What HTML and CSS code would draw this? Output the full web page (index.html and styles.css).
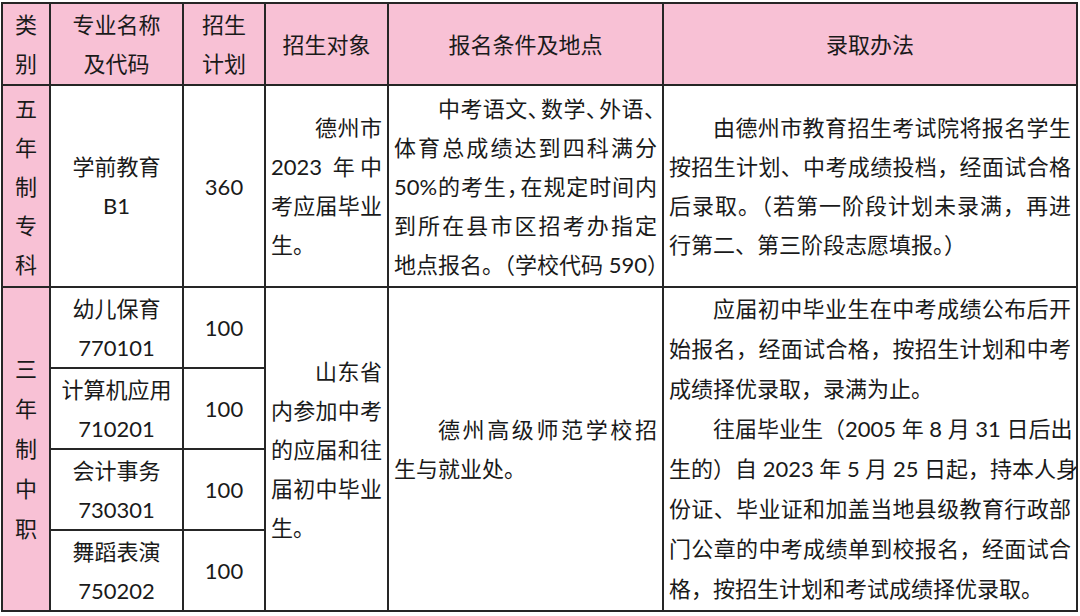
FILE: index.html
```html
<!DOCTYPE html>
<html lang="zh-CN">
<head>
<meta charset="utf-8">
<title>招生计划</title>
<link rel="stylesheet" href="styles.css">
</head>
<body>
<table class="plan">
  <colgroup>
    <col class="c1"><col class="c2"><col class="c3"><col class="c4"><col class="c5"><col class="c6">
  </colgroup>
  <tr class="head">
    <th>类<br>别</th>
    <th>专业名称<br>及代码</th>
    <th>招生<br>计划</th>
    <th>招生对象</th>
    <th>报名条件及地点</th>
    <th>录取办法</th>
  </tr>
  <tr class="row1">
    <td class="kind">五<br>年<br>制<br>专<br>科</td>
    <td class="mid">学前教育<br>B1</td>
    <td class="mid">360</td>
    <td class="txt">
      <span class="ln j ind">德州市</span>
      <span class="ln j">2023 年中</span>
      <span class="ln j">考应届毕业</span>
      <span class="ln">生。</span>
    </td>
    <td class="txt">
      <span class="ln j ind">中考语文<span class="pn">、</span>数学<span class="pn">、</span>外语<span class="pn">、</span></span>
      <span class="ln j">体育总成绩达到四科满分</span>
      <span class="ln j">50%的考生<span class="pn">，</span>在规定时间内</span>
      <span class="ln j">到所在县市区招考办指定</span>
      <span class="ln j">地点报名。（学校代码 590）</span>
    </td>
    <td class="txt">
      <span class="ln j ind">由德州市教育招生考试院将报名学生</span>
      <span class="ln j">按招生计划、中考成绩投档，经面试合格</span>
      <span class="ln j">后录取。（若第一阶段计划未录满，再进</span>
      <span class="ln">行第二、第三阶段志愿填报。）</span>
    </td>
  </tr>
  <tr class="sub">
    <td class="kind" rowspan="4">三<br>年<br>制<br>中<br>职</td>
    <td class="mid code">幼儿保育<br>770101</td>
    <td class="mid">100</td>
    <td class="txt" rowspan="4">
      <span class="ln j ind">山东省</span>
      <span class="ln j">内参加中考</span>
      <span class="ln j">的应届和往</span>
      <span class="ln j">届初中毕业</span>
      <span class="ln">生。</span>
    </td>
    <td class="txt" rowspan="4">
      <span class="ln j ind">德州高级师范学校招</span>
      <span class="ln">生与就业处。</span>
    </td>
    <td class="txt wide" rowspan="4">
      <span class="ln j ind">应届初中毕业生在中考成绩公布后开</span>
      <span class="ln j">始报名，经面试合格，按招生计划和中考</span>
      <span class="ln">成绩择优录取，录满为止。</span>
      <span class="ln j ind">往届毕业生（2005 年 8 月 31 日后出</span>
      <span class="ln j">生的）自 2023 年 5 月 25 日起，持本人身</span>
      <span class="ln j">份证、毕业证和加盖当地县级教育行政部</span>
      <span class="ln j">门公章的中考成绩单到校报名，经面试合</span>
      <span class="ln">格，按招生计划和考试成绩择优录取。</span>
    </td>
  </tr>
  <tr class="sub">
    <td class="mid code">计算机应用<br>710201</td>
    <td class="mid">100</td>
  </tr>
  <tr class="sub">
    <td class="mid code">会计事务<br>730301</td>
    <td class="mid">100</td>
  </tr>
  <tr class="sub">
    <td class="mid code">舞蹈表演<br>750202</td>
    <td class="mid">100</td>
  </tr>
</table>
</body>
</html>
```

FILE: styles.css
```css
html, body {
  margin: 0;
  padding: 0;
  background: #ffffff;
}

body {
  padding: 2px 0 0 1px;
  font-family: Lato, "Noto Sans CJK SC", sans-serif;
  font-size: 22px;
  color: #1a1a1a;
}

.plan {
  border-collapse: collapse;
  table-layout: fixed;
  width: 1077px;
}

.c1 { width: 48px; }
.c2 { width: 133px; }
.c3 { width: 82px; }
.c4 { width: 123px; }
.c5 { width: 275px; }
.c6 { width: 414px; }

.plan th,
.plan td {
  border: 2px solid #262626;
  padding: 0;
  vertical-align: middle;
  line-height: 39px;
}

.plan th {
  font-weight: normal;
  text-align: center;
  background: #f8c1d5;
  line-height: 39px;
}

.head { height: 82px; }
.row1 { height: 202px; }
.sub { height: 81px; }

.kind {
  background: #f8c1d5;
  text-align: center;
  line-height: 39.5px;
}

.sub .kind { line-height: 40px; }

.mid {
  text-align: center;
}

.code {
  line-height: 37px;
}

.txt {
  padding: 0 5px 0 5px !important;
}

.wide {
  line-height: 40px !important;
}

.ln {
  display: block;
  white-space: nowrap;
}

.j {
  text-align: justify;
  text-align-last: justify;
}

.ind {
  padding-left: 44px;
}

.pn {
  letter-spacing: -9px;
}
```
